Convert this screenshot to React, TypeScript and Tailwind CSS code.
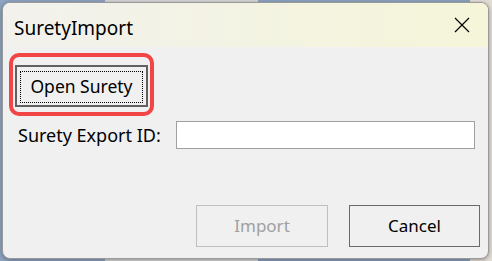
export default function App() {
  return (
    <div className="relative h-[261px] w-[492px] overflow-hidden bg-[#d4d4d4] font-['Noto_Sans',sans-serif]">
      {/* desktop behind the dialog */}
      <div className="absolute inset-0 flex">
        <div className="w-[105px] bg-[#8ea4c2]" />
        <div className="w-[153px] bg-[#d6d6d6]" />
        <div className="w-[212px] bg-[#8ca2c0]" />
        <div className="flex-1 bg-[#e2ddd4]" />
      </div>

      <div className="absolute left-[2px] top-[2px] flex h-[257px] w-[487px] flex-col overflow-hidden rounded-[8px] border border-[#9a9a9a] bg-[#f0f0f0] shadow-[0_1px_4px_rgba(0,0,0,0.35)]">
        <div className="flex h-[44px] shrink-0 items-center justify-between bg-gradient-to-r from-[#f2f1ed] to-[#f5f5d9] pl-[11px] pr-[18px]">
          <span className="mt-[7px] text-[19px] leading-none text-black">SuretyImport</span>
          <svg width="16" height="16" viewBox="0 0 16 16" className="text-black">
            <path d="M1 1 L15 15 M15 1 L1 15" stroke="currentColor" strokeWidth="1.2" fill="none" />
          </svg>
        </div>

        <div className="flex flex-1 flex-col">
          <div className="ml-[6px] mt-[6px] h-[63px] w-[145px] rounded-[10px] border-[4.5px] border-[#f24545] pb-[5px] pl-[2px] pr-[1px] pt-[7.5px]">
            <button className="relative flex h-[42px] w-[133px] items-center justify-center border-2 border-[#616161] bg-[#f0f0f0] pt-[1px] text-[17.5px] text-black">
              <span className="absolute bottom-[2px] left-[3px] right-[3px] top-[4px] border border-dotted border-black" />
              Open Surety
            </button>
          </div>

          <div className="mt-[5px] flex items-center">
            <span className="ml-[15px] mt-[1px] w-[158px] text-[18px] text-black">Surety Export ID:</span>
            <div className="h-[28px] w-[299px] border border-[#a0a0a0] bg-white" />
          </div>

          <div className="mt-[56px] flex justify-end gap-[21px] pr-[8px]">
            <button className="h-[42px] w-[132px] border border-[#bfbfbf] bg-[#f0f0f0] text-[17px] text-[#a0a0a0]">
              Import
            </button>
            <button className="h-[42px] w-[131px] border border-[#6a6a6a] bg-[#f0f0f0] text-[17px] text-black">
              Cancel
            </button>
          </div>
        </div>
      </div>
    </div>
  );
}
